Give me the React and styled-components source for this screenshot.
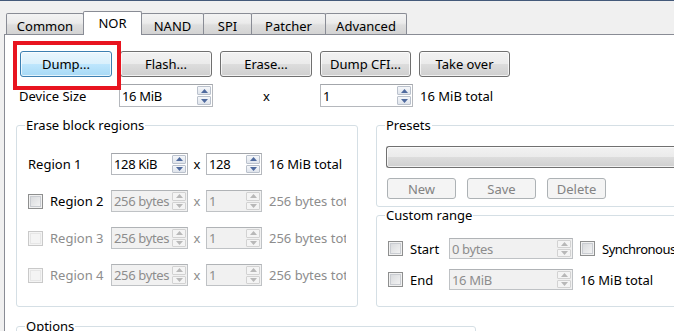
import React from "react";
import styled, { createGlobalStyle, css } from "styled-components";

const GlobalStyle = createGlobalStyle`
  html, body {
    margin: 0;
    padding: 0;
  }
  body {
    background: #f0f0f0;
    font-family: "Noto Sans", "Liberation Sans", sans-serif;
    font-size: 13px;
    line-height: 16px;
    color: #000;
    overflow: hidden;
  }
`;

const Window = styled.div`
  box-sizing: border-box;
  width: 674px;
  height: 331px;
  overflow: hidden;
  border-top: 1px solid #44597a;
  background: #f0f0f0;
`;

const TabBar = styled.div`
  display: flex;
  align-items: flex-end;
  height: 33px;
  padding-left: 6px;
`;

const Tab = styled.div`
  box-sizing: border-box;
  width: ${(p) => p.$w}px;
  height: 21px;
  margin-right: -1px;
  padding-top: 3px;
  display: flex;
  align-items: center;
  justify-content: center;
  border: 1px solid #898c95;
  border-bottom: none;
  border-radius: 2px 2px 0 0;
  background: linear-gradient(#f3f3f3 0%, #ebebeb 45%, #dedede 55%, #d3d3d3 100%);

  ${(p) =>
    p.$active &&
    css`
      position: relative;
      z-index: 1;
      height: 24px;
      margin-bottom: -1px;
      padding-top: 0;
      padding-bottom: 2px;
      background: #fff;
    `}
`;

const Pane = styled.div`
  position: relative;
  height: 300px;
  margin-left: 4px;
  padding: 16px 0 0 15px;
  background: #fff;
  border-top: 1px solid #898c95;
  border-left: 1px solid #898c95;
`;

const Highlight = styled.div`
  position: absolute;
  left: 8px;
  top: 6px;
  width: 108px;
  height: 49px;
  box-sizing: border-box;
  border: 4px solid #e8141f;
  pointer-events: none;
`;

const ButtonRow = styled.div`
  display: flex;
  gap: 8px;
`;

const Button = styled.button`
  box-sizing: border-box;
  width: ${(p) => p.$w || 92}px;
  height: ${(p) => p.$h || 26}px;
  padding: 0;
  font: inherit;
  color: #000;
  border: 1px solid #707070;
  border-radius: 3px;
  background: linear-gradient(#f2f2f2 0%, #ebebeb 50%, #dddddd 50%, #cfcfcf 100%);
  box-shadow: inset 0 0 0 1px rgba(255, 255, 255, 0.7);

  ${(p) =>
    p.$hover &&
    css`
      border-color: #3c7fb1;
      background: linear-gradient(#eaf6fd 0%, #d9f0fc 50%, #bee6fd 50%, #a7d9f5 100%);
    `}

  ${(p) =>
    p.disabled &&
    css`
      color: #838383;
      border-color: #adb2b5;
      background: #f4f4f4;
      box-shadow: none;
    `}
`;

const DeviceRow = styled.div`
  display: flex;
  align-items: center;
  height: 23px;
  margin: 7px 0 0 -1px;
`;

const RowLabel = styled.span`
  width: ${(p) => p.$w}px;
  flex-shrink: 0;
  white-space: nowrap;
  overflow: hidden;
  color: ${(p) => (p.$disabled ? "#8d8d8d" : "#000")};
`;

const Times = styled.span`
  width: ${(p) => p.$w}px;
  flex-shrink: 0;
  text-align: center;
  color: ${(p) => (p.$disabled ? "#8d8d8d" : "#000")};
`;

const Spin = styled.div`
  box-sizing: border-box;
  width: ${(p) => p.$w}px;
  height: ${(p) => p.$h || 22}px;
  flex-shrink: 0;
  display: flex;
  border: 1px solid ${(p) => (p.$disabled ? "#bfc2c5" : "#b5b8bd")};
  border-top-color: ${(p) => (p.$disabled ? "#b0b3b6" : "#a3a6ab")};
  background: ${(p) => (p.$disabled ? "#f1f1f1" : "#fff")};
`;

const SpinText = styled.span`
  flex: 1;
  min-width: 0;
  padding-left: 2px;
  display: flex;
  align-items: center;
  white-space: nowrap;
  overflow: hidden;
  letter-spacing: -0.35px;
  color: ${(p) => (p.$disabled ? "#8d8d8d" : "#000")};
`;

const SpinArrows = styled.div`
  width: 14px;
  padding: 1px;
  display: flex;
  flex-direction: column;
  gap: 1px;
`;

const ArrowBtn = styled.div`
  flex: 1;
  display: flex;
  align-items: center;
  justify-content: center;
  border: 1px solid ${(p) => (p.$disabled ? "#d2d2d2" : "#bac1cc")};
  border-radius: 1px;
  background: ${(p) =>
    p.$disabled ? "#f4f4f4" : "linear-gradient(#f5f7fa, #dfe4ec)"};

  svg {
    fill: ${(p) => (p.$disabled ? "#b8b8b8" : "#4f6a9e")};
  }
`;

const SpinBox = ({ value, w, h, disabled }) => (
  <Spin $w={w} $h={h} $disabled={disabled}>
    <SpinText $disabled={disabled}>{value}</SpinText>
    <SpinArrows>
      <ArrowBtn $disabled={disabled}>
        <svg width="7" height="4" viewBox="0 0 7 4">
          <polygon points="0,4 3.5,0 7,4" />
        </svg>
      </ArrowBtn>
      <ArrowBtn $disabled={disabled}>
        <svg width="7" height="4" viewBox="0 0 7 4">
          <polygon points="0,0 7,0 3.5,4" />
        </svg>
      </ArrowBtn>
    </SpinArrows>
  </Spin>
);

const Gap = styled.span`
  width: ${(p) => p.$w}px;
  flex-shrink: 0;
`;

const Columns = styled.div`
  display: flex;
  gap: 18px;
  margin: 10px 0 0 -4px;
`;

const RightColumn = styled.div`
  width: 320px;
  flex-shrink: 0;
  display: flex;
  flex-direction: column;
`;

const Group = styled.fieldset`
  box-sizing: border-box;
  width: ${(p) => p.$w}px;
  min-width: 0;
  margin: 0;
  padding: 0;
  border: 1px solid #d5dfe5;
  border-radius: 3px;
  flex-shrink: 0;
`;

const Legend = styled.legend`
  margin-left: 8px;
  padding: 0 1px;
  line-height: 16px;
`;

const GroupBody = styled.div`
  padding: ${(p) => p.$pad};
`;

const RegionList = styled.div`
  display: flex;
  flex-direction: column;
  gap: 15px;
  margin-top: 20px;
`;

const FormRow = styled.div`
  display: flex;
  align-items: center;
  height: ${(p) => p.$h || 22}px;
`;

const Check = styled.span`
  box-sizing: border-box;
  width: 15px;
  height: 15px;
  flex-shrink: 0;
  margin-right: 7px;
  border: 1px solid ${(p) => (p.$disabled ? "#c9c9c9" : "#8e8f8f")};
  background: ${(p) =>
    p.$disabled ? "#f4f4f4" : "linear-gradient(135deg, #d4d6d9, #f7f7f7)"};
  box-shadow: inset 0 0 0 1px ${(p) => (p.$disabled ? "#f4f4f4" : "#f1f1f1")},
    inset 0 0 0 2px ${(p) => (p.$disabled ? "#e6e6e6" : "#c9ccd1")};
`;

const Combo = styled.div`
  box-sizing: border-box;
  height: 22px;
  margin-top: 13px;
  border: 1px solid #707070;
  border-right: none;
  border-radius: 3px 0 0 3px;
  background: linear-gradient(#f2f2f2 0%, #ebebeb 50%, #dddddd 50%, #cfcfcf 100%);
  box-shadow: inset 0 0 0 1px rgba(255, 255, 255, 0.7);
`;

const PresetButtons = styled.div`
  display: flex;
  gap: 11px;
  margin: 10px 0 0 1px;
`;

const RangeList = styled.div`
  display: flex;
  flex-direction: column;
  gap: 10px;
  margin-top: 15px;
`;

const Synchronous = styled.span`
  white-space: nowrap;
  letter-spacing: -0.5px;
`;

const OptionsGroup = styled(Group)`
  margin: 11px 0 0 -4px;
  height: 40px;
`;

const tabs = [
  { name: "Common", w: 78 },
  { name: "NOR", w: 59, active: true },
  { name: "NAND", w: 63 },
  { name: "SPI", w: 49 },
  { name: "Patcher", w: 75 },
  { name: "Advanced", w: 82 },
];

const regions = [
  { name: "Region 1", size: "128 KiB", count: "128", total: "16 MiB total" },
  { name: "Region 2", size: "256 bytes", count: "1", total: "256 bytes total", check: true },
  { name: "Region 3", size: "256 bytes", count: "1", total: "256 bytes total", check: true, off: true },
  { name: "Region 4", size: "256 bytes", count: "1", total: "256 bytes total", check: true, off: true },
];

export default function App() {
  return (
    <>
      <GlobalStyle />
      <Window>
        <TabBar>
          {tabs.map((t) => (
            <Tab key={t.name} $w={t.w} $active={t.active}>
              {t.name}
            </Tab>
          ))}
        </TabBar>
        <Pane>
          <ButtonRow>
            <Button $hover>Dump...</Button>
            <Button>Flash...</Button>
            <Button>Erase...</Button>
            <Button $w={91}>Dump CFI...</Button>
            <Button $w={91}>Take over</Button>
          </ButtonRow>

          <DeviceRow>
            <RowLabel $w={100}>Device Size</RowLabel>
            <SpinBox value="16 MiB" w={94} h={23} />
            <Times $w={107}>x</Times>
            <SpinBox value="1" w={93} h={23} />
            <Gap $w={7} />
            <span>16 MiB total</span>
          </DeviceRow>

          <Columns>
            <Group $w={342}>
              <Legend>Erase block regions</Legend>
              <GroupBody $pad="0 0 18px 11px">
                <RegionList>
                  {regions.map((r) => (
                    <FormRow key={r.name}>
                      {r.check && <Check $disabled={r.off} />}
                      <RowLabel $w={r.check ? 61 : 83} $disabled={r.off}>
                        {r.name}
                      </RowLabel>
                      <SpinBox value={r.size} w={77} disabled={r.check} />
                      <Times $w={18} $disabled={r.check}>x</Times>
                      <SpinBox value={r.count} w={56} disabled={r.check} />
                      <Gap $w={7} />
                      <RowLabel $w={77} $disabled={r.check}>
                        {r.total}
                      </RowLabel>
                    </FormRow>
                  ))}
                </RegionList>
              </GroupBody>
            </Group>

            <RightColumn>
              <Group $w={320}>
                <Legend>Presets</Legend>
                <GroupBody $pad="0 0 7px 9px">
                  <Combo />
                  <PresetButtons>
                    <Button disabled $w={69} $h={21}>New</Button>
                    <Button disabled $w={69} $h={21}>Save</Button>
                    <Button disabled $w={59} $h={21}>Delete</Button>
                  </PresetButtons>
                </GroupBody>
              </Group>
              <Group $w={320}>
                <Legend>Custom range</Legend>
                <GroupBody $pad="0 0 16px 11px">
                  <RangeList>
                    <FormRow $h={21}>
                      <Check />
                      <RowLabel $w={39}>Start</RowLabel>
                      <SpinBox value="0 bytes" w={124} h={21} disabled />
                      <Gap $w={7} />
                      <Check />
                      <Synchronous>Synchronous</Synchronous>
                    </FormRow>
                    <FormRow $h={21}>
                      <Check />
                      <RowLabel $w={39}>End</RowLabel>
                      <SpinBox value="16 MiB" w={124} h={21} disabled />
                      <Gap $w={7} />
                      <span>16 MiB total</span>
                    </FormRow>
                  </RangeList>
                </GroupBody>
              </Group>
            </RightColumn>
          </Columns>

          <OptionsGroup $w={460}>
            <Legend>Options</Legend>
          </OptionsGroup>

          <Highlight />
        </Pane>
      </Window>
    </>
  );
}
